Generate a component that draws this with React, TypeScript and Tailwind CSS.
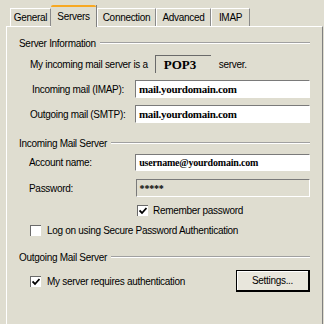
import React from "react";

const Tab = ({ label, w, active }: { label: string; w: number; active?: boolean }) => {
  if (active) {
    return (
      <div
        className="relative z-10 -mb-px flex h-[22px] items-start justify-center border-r border-[#808080] bg-[#dfddd0] pt-[4px]"
        style={{ width: w }}
      >
        <div className="absolute inset-x-0 top-0 h-[2px] rounded-t-[2px] bg-[#f7a823]" />
        <span>{label}</span>
      </div>
    );
  }
  return (
    <div
      className="flex h-[18px] items-center justify-center border-l border-t border-r border-l-white border-t-white border-r-[#8a8a8a] pb-px"
      style={{ width: w }}
    >
      {label}
    </div>
  );
};

const GroupLabel = ({ text, className }: { text: string; className?: string }) => (
  <div className={`flex h-[12px] items-center gap-[4px] ${className ?? ""}`}>
    <span className="whitespace-nowrap">{text}</span>
    <div className="h-[2px] flex-1 border-t border-b border-t-[#a0a0a0] border-b-white" />
  </div>
);

const Field = ({
  value,
  w,
  gray,
  h = 18,
  small,
}: {
  value: string;
  w: number;
  gray?: boolean;
  h?: number;
  small?: boolean;
}) => (
  <div
    className={`flex items-center whitespace-nowrap border-t border-l border-b border-r border-t-[#7a7a7a] border-l-[#7a7a7a] border-b-white border-r-white pl-[3px] font-['Liberation_Serif',serif] font-bold ${
      gray ? "bg-[#dfddd0]" : "bg-white"
    } ${small ? "text-[10px] tracking-[-0.2px]" : "text-[11px]"}`}
    style={{ width: w, height: h }}
  >
    {value}
  </div>
);

const Check = ({ checked }: { checked?: boolean }) => (
  <div className="flex h-[11px] w-[11px] items-center justify-center border-t border-l border-t-[#6a6a6a] border-l-[#6a6a6a] bg-white">
    {checked && (
      <svg width="8" height="8" viewBox="0 0 8 8">
        <path d="M0.5 3.5 L3 6 L7.5 1" stroke="#000" strokeWidth="1.8" fill="none" />
      </svg>
    )}
  </div>
);

export default function App() {
  return (
    <div className="h-[324px] w-[324px] overflow-hidden bg-[#dfddd0] font-['Liberation_Sans',Arial,sans-serif] text-[10px] tracking-[-0.3px] text-black">
      <div className="flex h-[26px] items-end pl-[10px]">
        <Tab label="General" w={41} />
        <Tab label="Servers" w={46} active />
        <Tab label="Connection" w={59} />
        <Tab label="Advanced" w={55} />
        <Tab label="IMAP" w={39} />
      </div>
      <div className="ml-[6px] mr-[1px] h-[300px] border-l border-t border-r border-l-white border-t-white border-r-[#808080] pl-[12px] pr-[12px]">
        <GroupLabel text="Server Information" className="mt-[10px]" />
        <div className="ml-[11px] mt-[6px] flex h-[18px] items-center">
          <span className="whitespace-nowrap">My incoming mail server is a</span>
          <div className="ml-[7px] flex h-[18px] w-[56px] items-center border-t border-l border-t-[#6a6a6a] border-l-[#6a6a6a] pl-[8px] font-['Liberation_Serif',serif] text-[13px] font-bold tracking-normal">
            POP3
          </div>
          <span className="ml-[8px]">server.</span>
        </div>
        <div className="ml-[11px] mt-[7px] flex h-[18px] items-center">
          <span className="w-[94px] whitespace-nowrap text-right">Incoming mail (IMAP):</span>
          <div className="ml-[11px]">
            <Field value="mail.yourdomain.com" w={175} />
          </div>
        </div>
        <div className="ml-[11px] mt-[7px] flex h-[18px] items-center">
          <span className="w-[94px] whitespace-nowrap text-right">Outgoing mail (SMTP):</span>
          <div className="ml-[11px]">
            <Field value="mail.yourdomain.com" w={175} />
          </div>
        </div>
        <GroupLabel text="Incoming Mail Server" className="mt-[14px]" />
        <div className="ml-[10px] mt-[5px] flex h-[17px] items-center">
          <span className="w-[107px]">Account name:</span>
          <Field value="username@yourdomain.com" w={176} h={17} small />
        </div>
        <div className="ml-[10px] mt-[8px] flex h-[18px] items-center">
          <span className="w-[107px]">Password:</span>
          <Field value="*****" w={175} gray small />
        </div>
        <div className="ml-[118px] mt-[8px] flex h-[11px] items-center gap-[5px]">
          <Check checked />
          <span>Remember password</span>
        </div>
        <div className="ml-[11px] mt-[9px] flex h-[11px] items-center gap-[6px]">
          <Check />
          <span>Log on using Secure Password Authentication</span>
        </div>
        <GroupLabel text="Outgoing Mail Server" className="mt-[15px]" />
        <div className="ml-[11px] mt-[7px] flex h-[22px] items-center">
          <Check checked />
          <span className="ml-[6px] flex-1">My server requires authentication</span>
          <div className="flex h-[22px] w-[74px] items-center justify-center border border-black border-b-2 border-r-2 bg-[#e8e6dc] shadow-[inset_1px_1px_0_#fff]">
            Settings...
          </div>
        </div>
      </div>
    </div>
  );
}
